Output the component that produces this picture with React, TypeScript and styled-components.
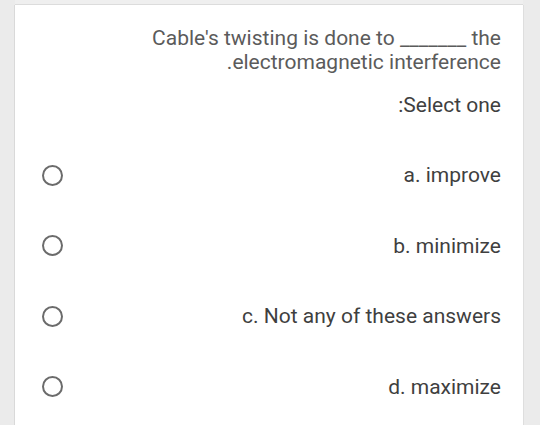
import React from "react";
import styled, { createGlobalStyle } from "styled-components";

const Global = createGlobalStyle`
  html, body { margin: 0; padding: 0; background: #ebebeb; }
  body { font-family: Roboto, "Noto Sans", Arial, sans-serif; }
`;

const Page = styled.div`
  width: 540px;
  height: 425px;
  overflow: hidden;
  display: flex;
  flex-direction: column;
  background: #ebebeb;
`;

const TopEdge = styled.div`
  height: 4px;
  margin: 0 17px 0 15px;
  background: #efefef;
  border-bottom: 1px solid #dcdcdc;
  flex: none;
`;

const Card = styled.div`
  flex: 1;
  margin: 0 17px 0 15px;
  background: #ffffff;
  box-shadow: -1px 0 0 #d9d9d9, 1px 0 0 #dedede;
  padding: 21px 22px 0 0;
  display: flex;
  flex-direction: column;
`;

const Question = styled.div`
  direction: rtl;
  text-align: right;
  color: #5b5b5b;
  font-size: 21px;
  line-height: 24px;
  padding-left: 120px;
`;

const Prompt = styled.div`
  direction: rtl;
  text-align: right;
  color: #3f3f3f;
  font-size: 21px;
  line-height: 24px;
  margin-top: 19px;
`;

const Options = styled.div`
  display: flex;
  flex-direction: column;
  margin-top: 23px;
`;

const Option = styled.label`
  display: flex;
  align-items: center;
  justify-content: space-between;
  height: 70.5px;
  padding-left: 27px;
`;

const Radio = styled.span`
  width: 21px;
  height: 21px;
  box-sizing: border-box;
  border-radius: 50%;
  border: 2.5px solid #6b6b6b;
  flex: none;
`;

const OptionText = styled.span`
  direction: rtl;
  color: #3f3f3f;
  font-size: 21px;
  line-height: 24px;
`;

const options = ["a. improve", "b. minimize", "c. Not any of these answers", "d. maximize"];

export default function App() {
  return (
    <>
      <Global />
      <Page>
        <TopEdge />
        <Card>
          <Question>
            Cable's twisting is done to _______ the electromagnetic interference.
          </Question>
          <Prompt>Select one:</Prompt>
          <Options>
            {options.map((o) => (
              <Option key={o}>
                <Radio />
                <OptionText>{o}</OptionText>
              </Option>
            ))}
          </Options>
        </Card>
      </Page>
    </>
  );
}
